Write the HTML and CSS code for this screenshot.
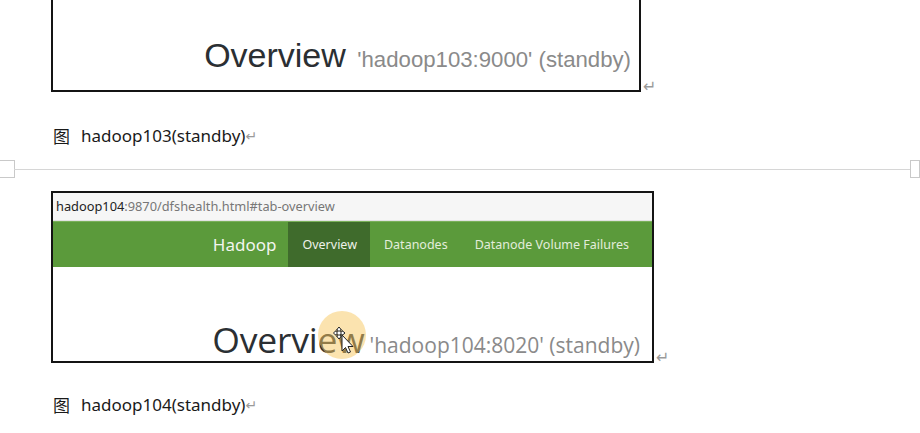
FILE: index.html
```html
<!DOCTYPE html>
<html lang="zh">
<head>
<meta charset="utf-8">
<title>hadoop standby</title>
<link rel="stylesheet" href="styles.css">
</head>
<body>
<div class="doc">
  <div class="para shot-row">
    <div class="shot shot1">
      <div class="heading1">Overview <small>'hadoop103:9000' (standby)</small></div>
    </div>
    <span class="ret">↵</span>
  </div>

  <div class="caption caption1"><span class="tu">图</span> hadoop103(standby)<span class="ret">↵</span></div>

  <div class="pagebreak">
    <span class="mark mark-left"></span>
    <span class="rule"></span>
    <span class="mark mark-right"></span>
  </div>

  <div class="para shot-row">
    <div class="shot shot2">
      <div class="urlbar"><b>hadoop104</b>:9870/dfshealth.html#tab-overview</div>
      <div class="nav">
        <span class="brand">Hadoop</span>
        <span class="tab active">Overview</span>
        <span class="tab">Datanodes</span>
        <span class="tab">Datanode Volume Failures</span>
      </div>
      <div class="body2">
        <div class="heading2">Overview <small>'hadoop104:8020' (standby)</small></div>
        <span class="halo"></span>
        <svg class="cursor" width="22" height="28" viewBox="0 0 22 28">
          <g fill="#fff" stroke="#222" stroke-width="1" stroke-linejoin="round">
            <path d="M6 1 L8.5 4 L7 4 L7 6 L9 6 L9 4.5 L12 7 L9 9.5 L9 8 L7 8 L7 10 L8.5 10 L6 13 L3.5 10 L5 10 L5 8 L3 8 L3 9.5 L0.5 7 L3 4.5 L3 6 L5 6 L5 4 L3.5 4 Z"/>
            <path d="M9 9 L9 25 L12.5 21.5 L15 27 L17.5 26 L15 20.5 L20 20.5 Z"/>
          </g>
        </svg>
      </div>
    </div>
    <span class="ret">↵</span>
  </div>

  <div class="caption caption2"><span class="tu">图</span> hadoop104(standby)<span class="ret">↵</span></div>
</div>
</body>
</html>
```

FILE: styles.css
```css
html, body {
  margin: 0;
  padding: 0;
  background: #ffffff;
}

body {
  width: 920px;
  height: 433px;
  overflow: hidden;
  font-family: "Noto Sans", "Noto Sans CJK SC", sans-serif;
  color: #1a1a1a;
}

.doc {
  display: flex;
  flex-direction: column;
}

.shot-row {
  display: flex;
  align-items: flex-end;
  padding-left: 51px;
}

.shot {
  border: 2px solid #141414;
  box-sizing: border-box;
  background: #fff;
}

.shot1 {
  width: 590px;
  height: 92px;
  border-top: none;
  display: flex;
  align-items: flex-end;
  justify-content: flex-end;
  padding: 0 8px 13px 0;
}

.heading1 {
  font-family: "Liberation Sans", Arial, sans-serif;
  font-size: 34px;
  line-height: 34px;
  color: #2b2f33;
  white-space: nowrap;
}

.heading1 small {
  font-size: 22.2px;
  color: #8a8a8a;
  margin-left: 2px;
}

.ret {
  font-family: "DejaVu Sans", sans-serif;
  font-size: 16px;
  color: #9a9a9a;
  line-height: 16px;
  margin-left: 2px;
}

.shot-row > .ret {
  margin-bottom: -3px;
}

.caption {
  padding-left: 53px;
  font-size: 17px;
  line-height: 22px;
  color: #1a1a1a;
  display: flex;
  align-items: center;
}

.caption .tu {
  font-family: "Noto Sans CJK SC", sans-serif;
  font-size: 17px;
  margin-right: 11px;
}

.caption .ret {
  margin-left: 0;
  font-size: 14px;
}

.caption1 {
  margin-top: 33px;
}

.pagebreak {
  margin-top: 13px;
  height: 18px;
  display: flex;
  align-items: center;
}

.mark {
  width: 12px;
  height: 18px;
  border: 1px solid #c9c9c9;
  box-sizing: border-box;
  flex: none;
}

.mark-left {
  margin-left: -1px;
  width: 16px;
}

.mark-right {
  width: 10px;
}

.rule {
  flex: 1;
  height: 1px;
  background: #d6d6d6;
  margin: 0 -1px;
}

.shot-row:nth-of-type(4) {
  margin-top: 13px;
}

.shot2 {
  width: 603px;
  height: 172px;
  display: flex;
  flex-direction: column;
}

.urlbar {
  height: 28px;
  background: #f6f6f6;
  border-bottom: 1px solid #e2e2e2;
  font-size: 12.8px;
  line-height: 27px;
  padding-left: 3px;
  color: #777;
  white-space: nowrap;
  box-sizing: border-box;
}

.urlbar b {
  font-weight: normal;
  color: #222;
}

.nav {
  height: 46px;
  background: #5b9a3b;
  border-top: 1px solid #7ab05a;
  display: flex;
  align-items: stretch;
  justify-content: flex-end;
  padding-right: 10px;
  box-sizing: border-box;
}

.nav .brand {
  font-size: 17px;
  color: #f2f5ef;
  display: flex;
  align-items: center;
  padding-right: 12px;
}

.nav .tab {
  font-size: 12.5px;
  color: #e3eddb;
  display: flex;
  align-items: center;
  padding: 0 13px;
}

.nav .tab.active {
  background: #3f6b2c;
  color: #eef2ea;
  padding: 0 13px 0 14px;
}

.nav .tab + .tab {
  margin-left: 1px;
}

.body2 {
  flex: 1;
  position: relative;
  display: flex;
  align-items: flex-end;
  justify-content: flex-end;
  padding: 0 12px 0 0;
}

.heading2 {
  font-family: "Open Sans", "Noto Sans", sans-serif;
  font-size: 35.5px;
  line-height: 32px;
  color: #2b2f33;
  white-space: nowrap;
  letter-spacing: -0.2px;
}

.heading2 small {
  font-size: 21px;
  color: #8a8a8a;
  letter-spacing: 0;
  margin-left: -4px;
}

.halo {
  position: absolute;
  left: 265px;
  top: 44px;
  width: 48px;
  height: 48px;
  border-radius: 50%;
  background: rgba(248, 200, 95, 0.5);
}

.cursor {
  position: absolute;
  left: 280px;
  top: 59px;
}

.caption2 {
  margin-top: 31px;
}
```
